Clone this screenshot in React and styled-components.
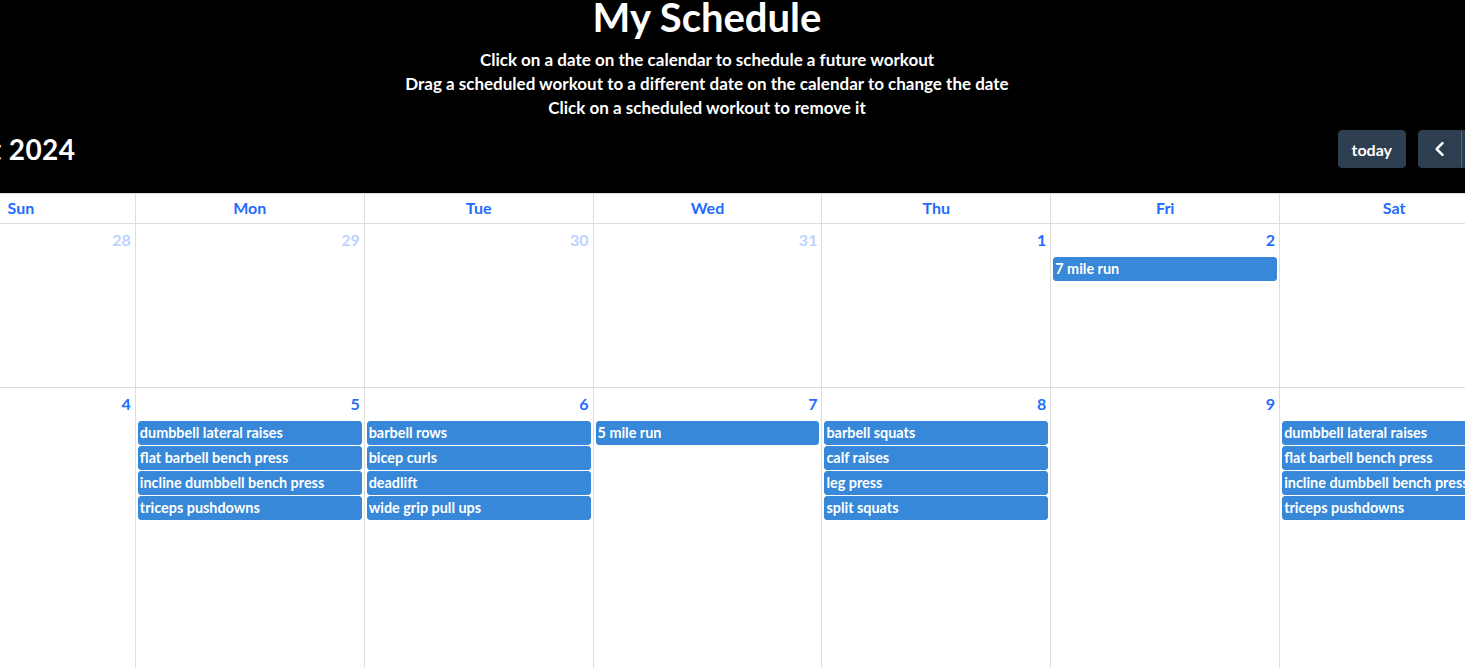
import React from 'react';
import styled, { createGlobalStyle } from 'styled-components';

const GlobalStyle = createGlobalStyle`
  html, body {
    margin: 0;
    padding: 0;
    background: #000;
    overflow: hidden;
  }
  body {
    font-family: Lato, "Open Sans", sans-serif;
  }
`;

const BLUE = '#1f6cff';
const EVENT_BG = '#3788d8';
const LINE = '#dddddd';

// la página es más ancha que la ventana: se ve recortada por ambos lados
const Page = styled.div`
  width: 1602px;
  margin-left: -94px;
  color: #fff;
`;

const Header = styled.header`
  text-align: center;
`;

const Title = styled.h1`
  margin: 0;
  font-size: 40px;
  line-height: 34px;
  font-weight: 700;
`;

const Instructions = styled.div`
  margin-top: 14px;
  font-size: 17px;
  line-height: 24px;
  font-weight: 700;

  p {
    margin: 0;
  }
`;

const Toolbar = styled.div`
  display: flex;
  align-items: center;
  justify-content: space-between;
  height: 38px;
  margin: 10px 0 25px;
  padding: 0 4px 0 5px;
`;

const MonthTitle = styled.h2`
  margin: 0;
  font-size: 28px;
  font-weight: 700;
  letter-spacing: 0.4px;
`;

const ToolbarRight = styled.div`
  display: flex;
  align-items: center;
  gap: 12px;
`;

const Button = styled.button`
  display: flex;
  align-items: center;
  justify-content: center;
  height: 38px;
  padding: 0 ${props => (props.icon ? '0' : '13px')};
  width: ${props => (props.icon ? '43px' : 'auto')};
  background: #2c3e50;
  border: 1px solid #2c3e50;
  border-radius: ${props => props.radius || '4px'};
  color: #fff;
  font-family: inherit;
  font-size: 16px;
  font-weight: 700;
  cursor: pointer;
`;

const ButtonGroup = styled.div`
  display: flex;

  & > button + button {
    border-left: 1px solid #56687a;
  }
`;

const Calendar = styled.div`
  background: #fff;
  border-top: 1px solid ${LINE};
`;

const WeekGrid = styled.div`
  display: grid;
  grid-template-columns: repeat(7, 1fr);
  height: ${props => props.height}px;
  border-bottom: 1px solid ${LINE};
`;

const HeadCell = styled.div`
  border-left: 1px solid ${LINE};
  text-align: center;
  color: ${BLUE};
  font-size: 16px;
  font-weight: 700;
  line-height: 28px;
`;

const DayCell = styled.div`
  border-left: 1px solid ${LINE};
  display: flex;
  flex-direction: column;
  min-width: 0;
`;

const DayNumber = styled.div`
  align-self: flex-end;
  padding: 4px;
  line-height: 24px;
  font-size: 16px;
  font-weight: 700;
  color: ${BLUE};
  opacity: ${props => (props.muted ? 0.3 : 1)};
`;

const EventList = styled.div`
  display: flex;
  flex-direction: column;
  gap: 1px;
  margin: 1px 2px 0;
`;

const EventChip = styled.div`
  height: 22px;
  line-height: 22px;
  padding: 0 1px;
  background: ${EVENT_BG};
  border: 1px solid ${EVENT_BG};
  border-radius: 3px;
  color: #fff;
  font-size: 14.4px;
  font-weight: 700;
  white-space: nowrap;
  overflow: hidden;
  cursor: pointer;
`;

const ChevronLeft = () => (
  <svg width="20" height="20" viewBox="0 0 24 24" fill="none" stroke="#fff" strokeWidth="3" strokeLinecap="round" strokeLinejoin="round">
    <path d="M15 5l-7 7 7 7" />
  </svg>
);

const ChevronRight = () => (
  <svg width="20" height="20" viewBox="0 0 24 24" fill="none" stroke="#fff" strokeWidth="3" strokeLinecap="round" strokeLinejoin="round">
    <path d="M9 5l7 7-7 7" />
  </svg>
);

const days = ['Sun', 'Mon', 'Tue', 'Wed', 'Thu', 'Fri', 'Sat'];

const upperBody = [
  'dumbbell lateral raises',
  'flat barbell bench press',
  'incline dumbbell bench press',
  'triceps pushdowns',
];

const weeks = [
  {
    height: 163,
    cells: [
      { day: 28, muted: true },
      { day: 29, muted: true },
      { day: 30, muted: true },
      { day: 31, muted: true },
      { day: 1 },
      { day: 2, events: ['7 mile run'] },
      { day: 3 },
    ],
  },
  {
    height: 320,
    cells: [
      { day: 4 },
      { day: 5, events: upperBody },
      { day: 6, events: ['barbell rows', 'bicep curls', 'deadlift', 'wide grip pull ups'] },
      { day: 7, events: ['5 mile run'] },
      { day: 8, events: ['barbell squats', 'calf raises', 'leg press', 'split squats'] },
      { day: 9 },
      { day: 10, events: upperBody },
    ],
  },
];

export default function App() {
  return (
    <Page>
      <GlobalStyle />
      <Header>
        <Title>My Schedule</Title>
        <Instructions>
          <p>Click on a date on the calendar to schedule a future workout</p>
          <p>Drag a scheduled workout to a different date on the calendar to change the date</p>
          <p>Click on a scheduled workout to remove it</p>
        </Instructions>
      </Header>

      <Toolbar>
        <MonthTitle>August 2024</MonthTitle>
        <ToolbarRight>
          <Button>today</Button>
          <ButtonGroup>
            <Button icon radius="4px 0 0 4px"><ChevronLeft /></Button>
            <Button icon radius="0 4px 4px 0"><ChevronRight /></Button>
          </ButtonGroup>
        </ToolbarRight>
      </Toolbar>

      <Calendar>
        <WeekGrid height={29}>
          {days.map(d => (
            <HeadCell key={d}>{d}</HeadCell>
          ))}
        </WeekGrid>
        {weeks.map((week, i) => (
          <WeekGrid key={i} height={week.height}>
            {week.cells.map(cell => (
              <DayCell key={cell.day}>
                <DayNumber muted={cell.muted}>{cell.day}</DayNumber>
                {cell.events && (
                  <EventList>
                    {cell.events.map(ev => (
                      <EventChip key={ev}>{ev}</EventChip>
                    ))}
                  </EventList>
                )}
              </DayCell>
            ))}
          </WeekGrid>
        ))}
      </Calendar>
    </Page>
  );
}
